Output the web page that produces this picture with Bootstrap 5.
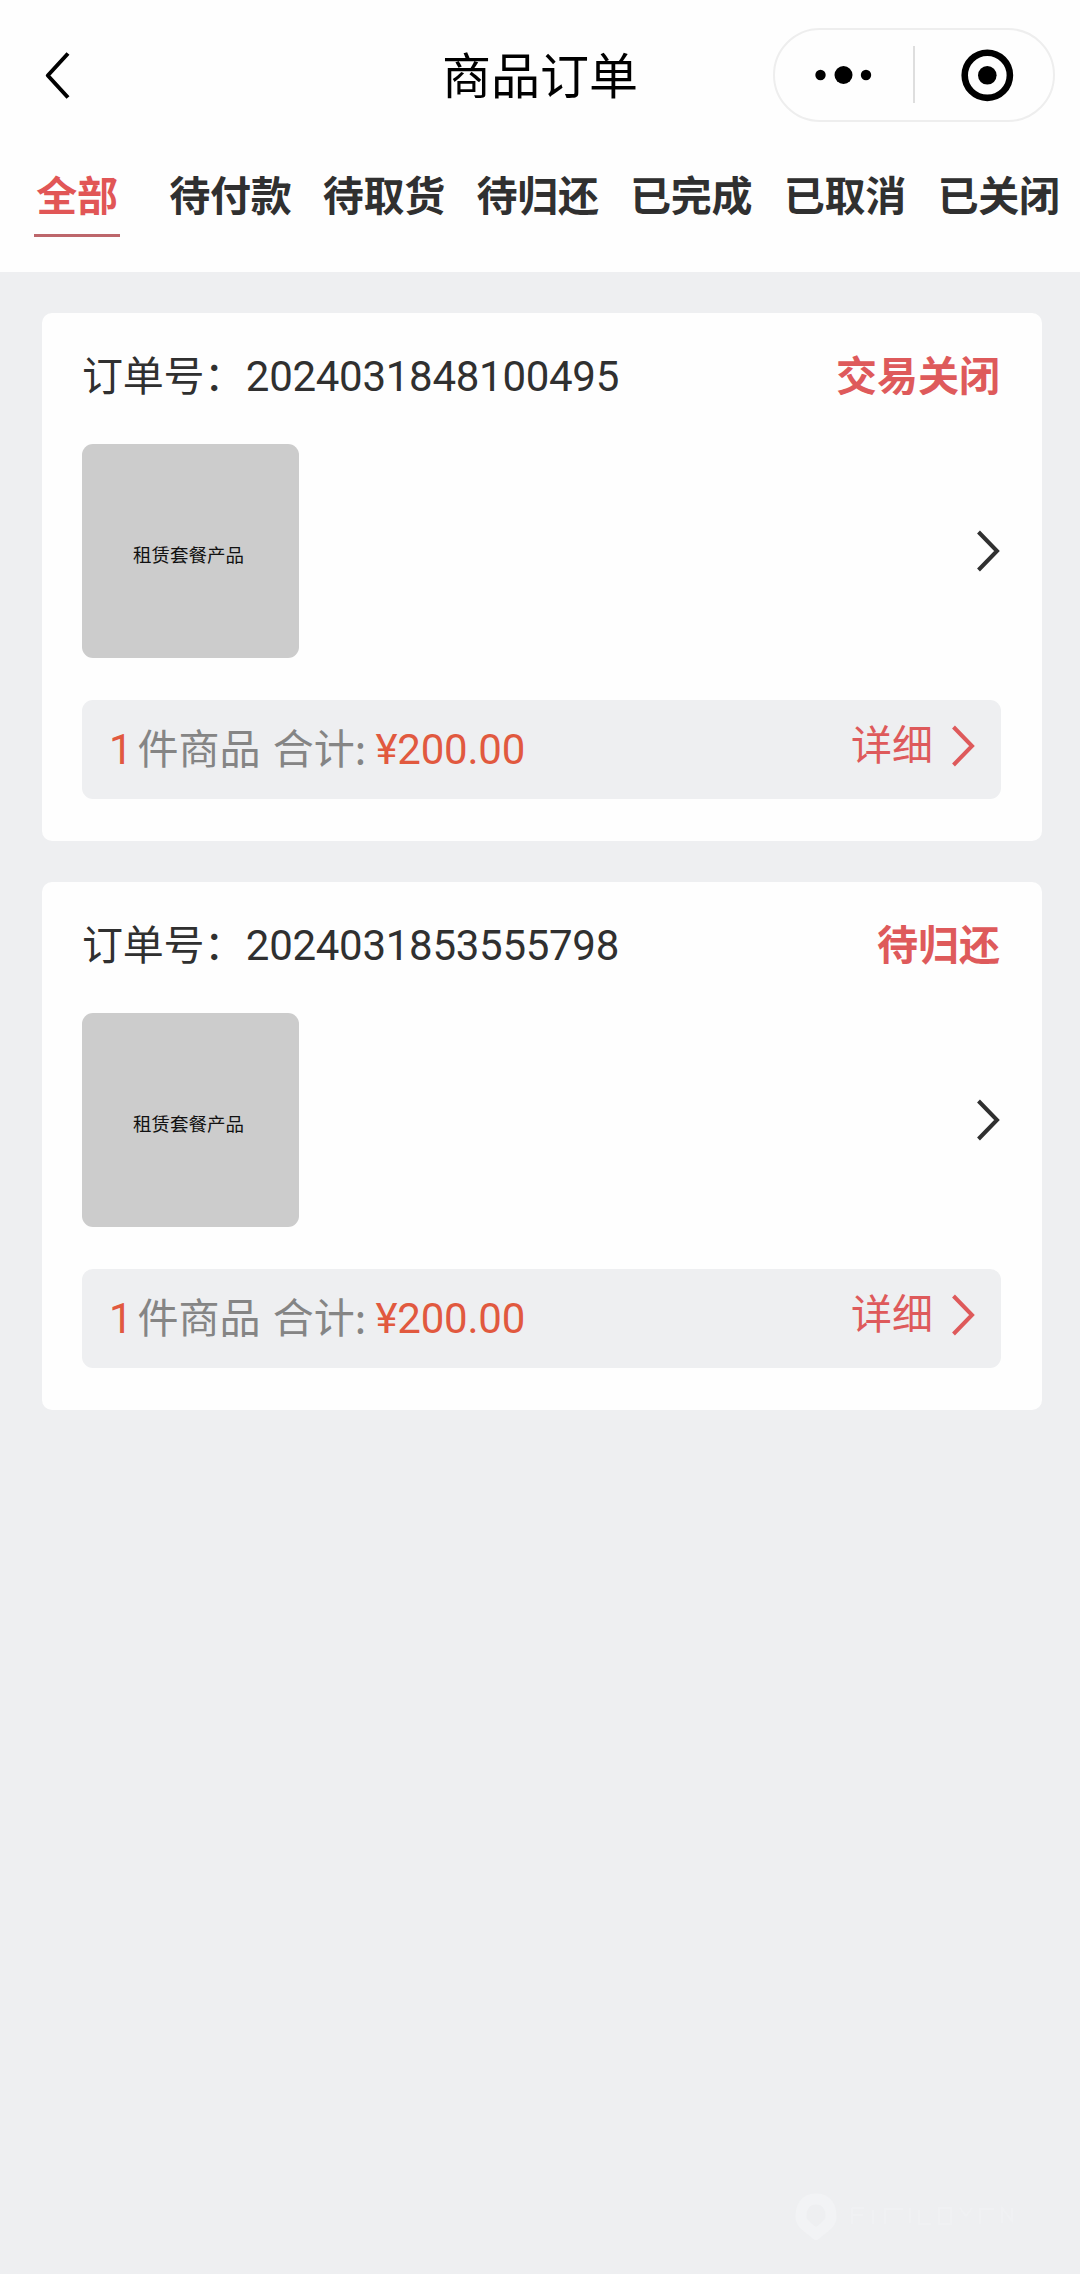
<!DOCTYPE html>
<html lang="zh-CN">
<head>
<meta charset="utf-8">
<meta name="viewport" content="width=device-width, initial-scale=1">
<title>商品订单</title>
<link rel="stylesheet" href="https://cdn.jsdelivr.net/npm/bootstrap@5.3.0/dist/css/bootstrap.min.css">
<style>
body{background:#eeeff1;color:#303030;font-family:"Noto Sans CJK SC",sans-serif;font-size:41px;line-height:60px;min-height:2274px}
svg{display:block;flex:none}
.page-head{height:272px;background:#fefefe}
.title-bar{height:149px;padding:0 46px 0 45px}
.title-bar>*{flex:1 1 0}
.page-title{font-size:49px;line-height:72px;color:#000;flex:0 0 auto;font-weight:400;padding:0 0 3px 1px}
.capsule{width:282px;height:94px;border:2px solid #eee;border-radius:47px;margin-right:-21px;flex:none}
.capsule-line{width:1.5px;height:57px;background:#dedede}
.tab-row{padding-left:34px;gap:31.4px;flex-wrap:nowrap;white-space:nowrap;margin-top:14px;letter-spacing:-.25px}
.tab-row .nav-link{padding:0;color:#303030;font-weight:700;height:74px}
.tab-row .nav-link.active{color:#e15656;border-bottom:3px solid #bd666b;width:86px;text-align:center;margin-right:17.8px}
.order-list{padding:41px 38px 0 42px;gap:41px}
.order-card{height:528px;border:0;border-radius:10px;background:#fefefe;padding:30px 41px 0 40px}
.order-head{height:60px}
.order-no{letter-spacing:-.3px}
.order-no span{font-family:Roboto,sans-serif;font-size:42px;line-height:1;letter-spacing:-.28px;margin-left:1px}
.state{color:#de5a5b;font-weight:700;margin-right:1px}
.thumb{width:217px;height:214px;background:#ccc;border-radius:11px;font-size:18.5px;line-height:28px;color:#111;padding-top:5px;padding-right:4px}
.product{margin-top:41px}
.product svg{margin-right:1px}
.summary{margin-top:42px;height:99px;border-radius:11px;background:#eeeff1;padding:0 26px 0 27px;color:#858585}
.sum-text{margin-top:-8px;white-space:pre}
.amount{color:#e1593f;font-family:Roboto,sans-serif;font-size:42px;line-height:1}
.count{margin-right:5px}
.total{margin-left:3px}
.price{margin-left:0;letter-spacing:-.2px}
.detail{color:#de5a5b;gap:18px}
.detail span{margin-top:-15px}
.detail svg{margin-top:-8px}
.watermark{position:absolute;left:790px;top:2190px}
</style>
<script src="https://cdn.jsdelivr.net/npm/bootstrap@5.3.0/dist/js/bootstrap.bundle.min.js"></script>
</head>
<body class="position-relative">
<header class="page-head">
  <div class="title-bar d-flex align-items-center">
    <div><svg width="26" height="48" viewBox="0 0 26 48" fill="none" stroke="#000" stroke-width="4"><path d="M23 2.5 2.8 24.5 23 46.5" stroke-linejoin="round"/></svg></div>
    <h1 class="page-title mb-0">商品订单</h1>
    <div class="d-flex justify-content-end">
      <div class="capsule d-flex align-items-center">
        <svg width="138" height="60" viewBox="0 0 138 60"><circle cx="45.5" cy="30" r="5.2"/><circle cx="68.5" cy="30" r="9"/><circle cx="91" cy="30" r="5.2"/></svg>
        <div class="capsule-line"></div>
        <svg width="138" height="60" viewBox="0 0 138 60"><circle cx="72.3" cy="30.3" r="22.6" fill="none" stroke="#000" stroke-width="6.6"/><circle cx="72.3" cy="30.3" r="9.3"/></svg>
      </div>
    </div>
  </div>
  <nav class="nav tab-row">
    <a class="nav-link active">全部</a>
    <a class="nav-link">待付款</a>
    <a class="nav-link">待取货</a>
    <a class="nav-link">待归还</a>
    <a class="nav-link">已完成</a>
    <a class="nav-link">已取消</a>
    <a class="nav-link">已关闭</a>
  </nav>
</header>
<main class="order-list d-flex flex-column">
  <article class="card order-card">
    <div class="order-head d-flex justify-content-between"><div class="order-no">订单号：<span>2024031848100495</span></div><div class="state">交易关闭</div></div>
    <div class="product d-flex justify-content-between align-items-center">
      <div class="thumb d-flex align-items-center justify-content-center">租赁套餐产品</div>
      <svg width="24" height="42" viewBox="0 0 24 42" fill="none" stroke="#303030" stroke-width="4"><path d="M2.5 2 21 21 2.5 40"/></svg>
    </div>
    <div class="summary d-flex justify-content-between align-items-center">
      <div class="sum-text"><span class="amount count">1</span>件商品 <span class="total">合计:</span> <span class="amount price">¥200.00</span></div>
      <div class="detail d-flex align-items-center"><span>详细</span><svg width="24" height="42" viewBox="0 0 24 42" fill="none" stroke="currentColor" stroke-width="4"><path d="M2.5 2 21 21 2.5 40"/></svg></div>
    </div>
  </article>
  <article class="card order-card">
    <div class="order-head d-flex justify-content-between"><div class="order-no">订单号：<span>2024031853555798</span></div><div class="state">待归还</div></div>
    <div class="product d-flex justify-content-between align-items-center">
      <div class="thumb d-flex align-items-center justify-content-center">租赁套餐产品</div>
      <svg width="24" height="42" viewBox="0 0 24 42" fill="none" stroke="#303030" stroke-width="4"><path d="M2.5 2 21 21 2.5 40"/></svg>
    </div>
    <div class="summary d-flex justify-content-between align-items-center">
      <div class="sum-text"><span class="amount count">1</span>件商品 <span class="total">合计:</span> <span class="amount price">¥200.00</span></div>
      <div class="detail d-flex align-items-center"><span>详细</span><svg width="24" height="42" viewBox="0 0 24 42" fill="none" stroke="currentColor" stroke-width="4"><path d="M2.5 2 21 21 2.5 40"/></svg></div>
    </div>
  </article>
</main>
<svg class="watermark" width="240" height="50" viewBox="0 0 240 50" fill="none" stroke="#f2f3f5">
  <path d="M26 9C14 9 11 18 11 27c0 7 7 10 15 17 8-7 15-10 15-17C41 18 38 9 26 9Z" stroke-width="11"/>
  <path d="M62 18h12M62 25h11M62 18v16M83 20v14M95 18v16M95 19h18M120 18v15M129 20v14h12M149 18v16h12V18ZM170 18l6 8 6-8M190 18v16M190 19h14M212 33V18l10 13V18" stroke="#f0f1f3" stroke-width="2"/>
</svg>
</body>
</html>
